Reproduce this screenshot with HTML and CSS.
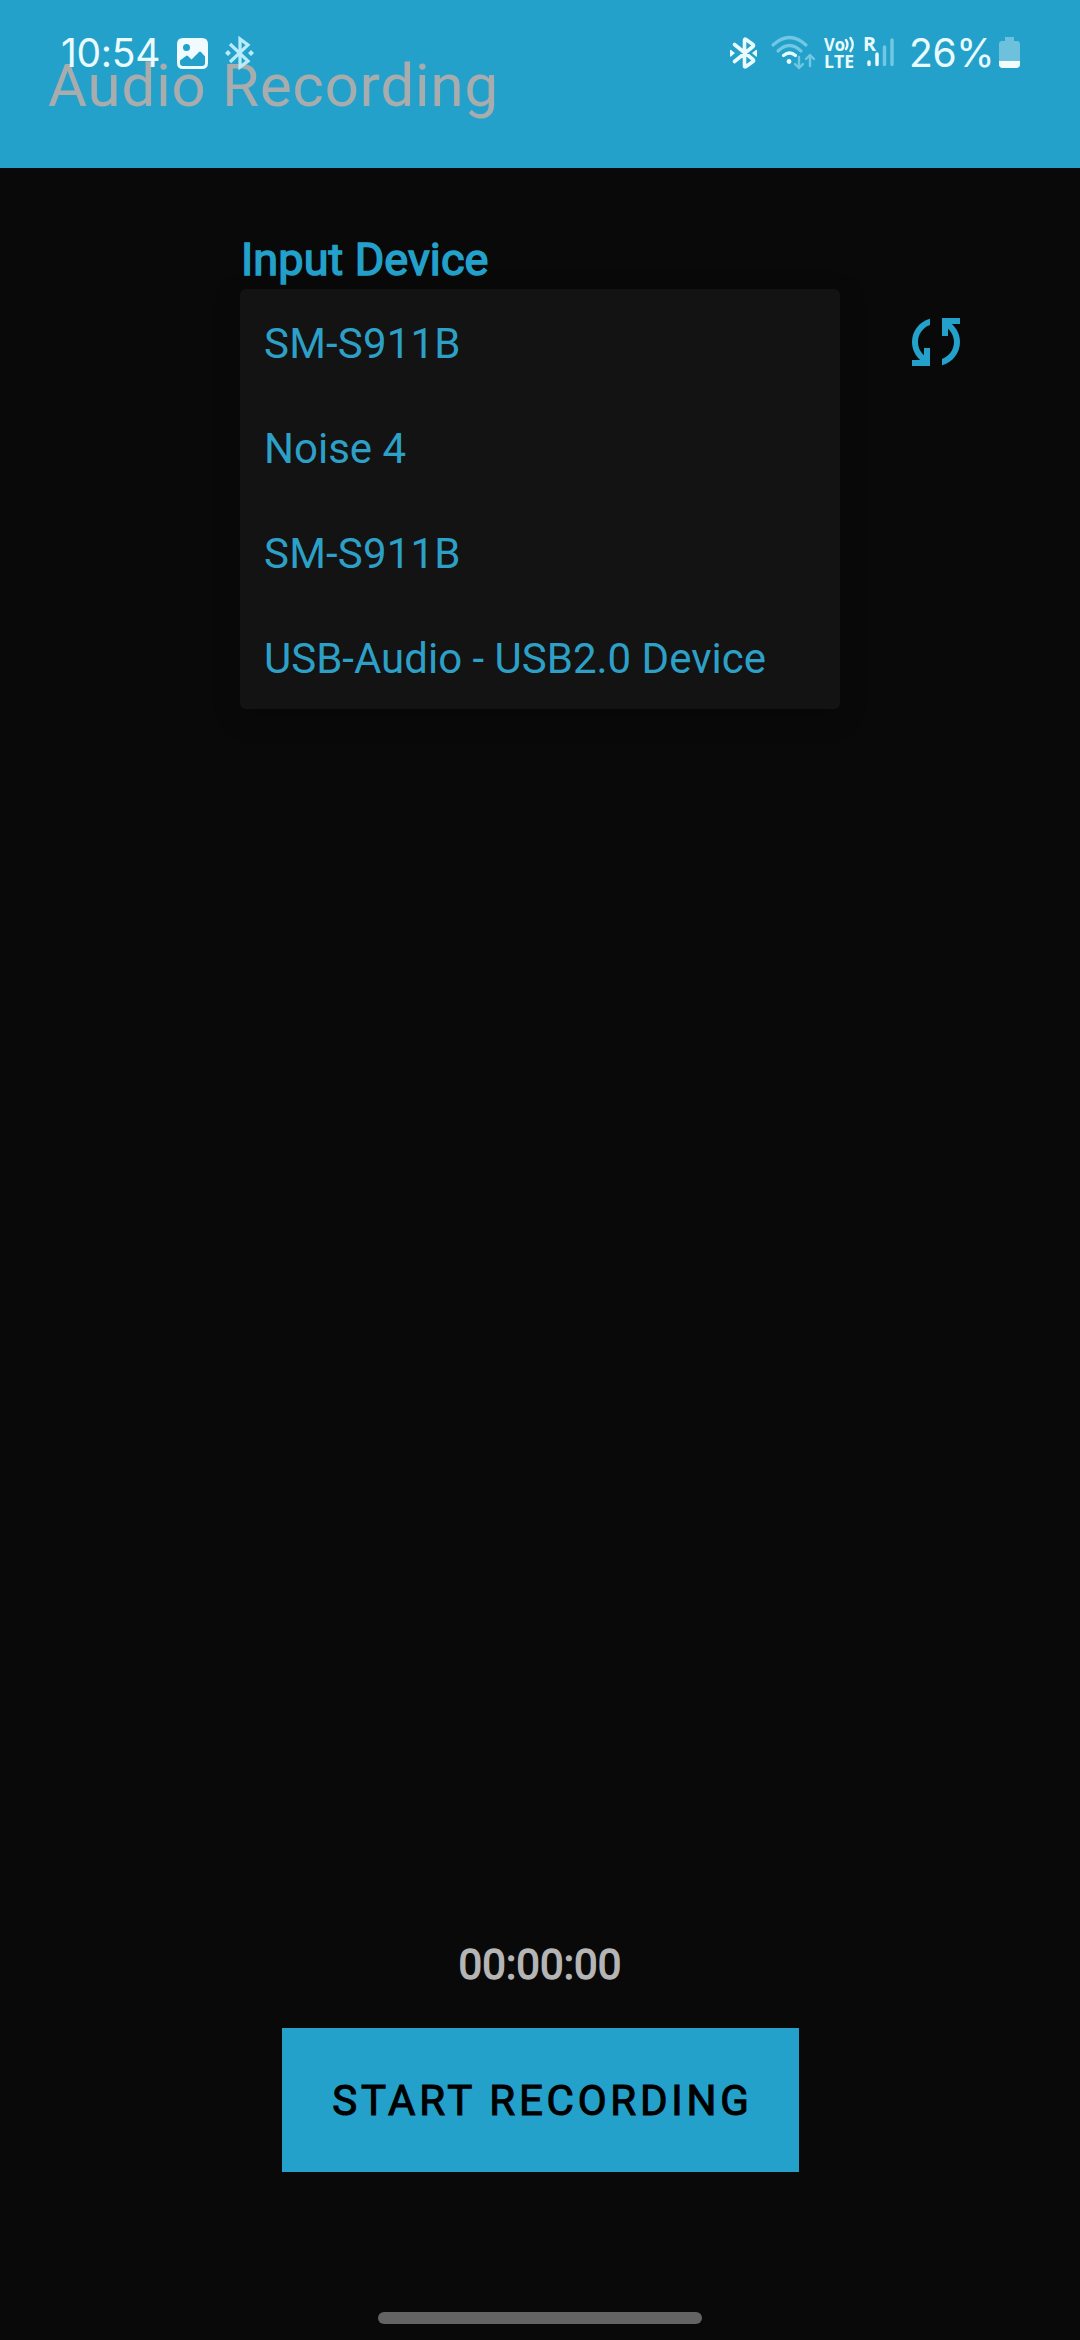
FILE: index.html
```html
<!DOCTYPE html>
<html lang="en">
<head>
<meta charset="utf-8">
<title>Audio Recording</title>
<link rel="stylesheet" href="styles.css">
</head>
<body>
<div class="screen">
  <header class="app-bar">
    <h1 class="title">Audio Recording</h1>
    <div class="status">
      <div class="status-left">
        <span class="clock">10:54</span>
        <svg class="ic-image" width="31" height="31" viewBox="0 0 31 31"><path fill-rule="evenodd" fill="#f0fbff" d="M6 0H25Q31 0 31 6V25Q31 31 25 31H6Q0 31 0 25V6Q0 0 6 0ZM9.500 6A3.500 3.500 0 1 0 9.500 13A3.500 3.500 0 1 0 9.500 6ZM3 22.500V25Q3 28 6 28H25Q28 28 28 25V18.500L24 14Q23 13 22 14L14.500 21.500L11 18Q10 17 9 18Z"/></svg>
        <svg class="ic-bt-left" width="30" height="34" viewBox="0 0 30 34"><g fill="none" stroke="#b9ecfb" stroke-width="3.200"><path d="M5 8L23 25L15 31V3L23 9L5 26"/></g><path fill="#b9ecfb" d="M3 14l3 3-3 3-3-3zM26 14l3 3-3 3-3-3z"/></svg>
      </div>
      <div class="status-right">
        <svg class="ic-bt" width="28" height="32" viewBox="0 0 28 32"><path d="M4.500 7.500L23 22.500Q24 23.500 23 24.500L16 29.500Q14.500 30.500 14.500 29V3Q14.500 1.500 16 2.500L23 7.500Q24 8.500 23 9.500L4.500 24.500" fill="none" stroke="#e9fbff" stroke-width="3.600" stroke-linecap="round" stroke-linejoin="round"/><path fill="#e9fbff" d="M0 13.500Q0 12.500 1 13L5 16L1 19.500Q0 20 0 19ZM27 13.500Q27 12.500 26 13L22 16L26 19.500Q27 20 27 19Z"/></svg>
        <svg class="ic-wifi" width="46" height="36" viewBox="0 0 46 36"><g fill="none" stroke-width="3.200" stroke-linecap="round"><path stroke="#72c7e2" d="M3 10Q19.500-5 36 10M8 16Q19.500 5 31 16"/><path stroke="#e9fbff" d="M13.500 20.500Q19.500 15.500 25.500 20.500"/><path stroke="#72c7e2" stroke-width="2.400" stroke-linejoin="round" d="M29 22V33M25 29L29 33L33 29M40 31V20M36 24L40 20L44 24"/></g><circle cx="19" cy="26.500" r="2.400" fill="#e9fbff"/></svg>
        <svg class="ic-volte" width="31" height="36" viewBox="0 0 31 36"><g fill="#e9fbff" font-family="Open Sans, sans-serif" font-weight="700" font-size="17"><text x="0" y="16" textLength="21" lengthAdjust="spacingAndGlyphs">Vo</text><text x="0" y="33" textLength="30" lengthAdjust="spacingAndGlyphs">LTE</text></g><path d="M22 5Q25 9.500 22 14M26.500 3Q31 9.500 26.500 16" fill="none" stroke="#e9fbff" stroke-width="2.400" stroke-linecap="round"/></svg>
        <svg class="ic-signal" width="32" height="36" viewBox="0 0 32 36"><text x="-1" y="16" fill="#e9fbff" font-family="Open Sans, sans-serif" font-weight="700" font-size="19" textLength="13" lengthAdjust="spacingAndGlyphs">R</text><g stroke-width="3.500" stroke-linecap="round"><path stroke="#e9fbff" d="M5 27V29.500M13 19V29.500"/><path stroke="#72c7e2" d="M20.500 12V29.500M28 5V29.500"/></g></svg>
        <span class="battery-text">26%</span>
        <svg class="ic-battery" width="21" height="31" viewBox="0 0 21 31"><path fill="#6dc1dd" d="M6 0H15V4H18Q21 4 21 7V27Q21 31 17 31H4Q0 31 0 27V7Q0 4 3 4H6Z"/><path fill="#f0fdff" d="M0 24H21V27Q21 31 17 31H4Q0 31 0 27Z"/></svg>
      </div>
    </div>
  </header>
  <main class="content">
    <section class="picker">
      <label class="label">Input Device</label>
      <div class="picker-row">
        <ul class="options">
          <li class="model">SM-S911B</li>
          <li>Noise 4</li>
          <li class="model">SM-S911B</li>
          <li>USB-Audio - USB2.0 Device</li>
        </ul>
        <svg class="refresh" width="72" height="72" viewBox="0 0 24 24"><path d="M10 4.260V6.350C7.670 7.170 6 9.390 6 12c0 1.770.780 3.340 2 4.440V14h2v6H4v-2h2.730C5.060 16.540 4 14.400 4 12c0-3.730 2.550-6.850 6-7.740zM14 4h6v2h-2.730C18.950 7.460 20 9.600 20 12c0 3.730-2.550 6.850-6 7.740v-2.090c2.330-.820 4-3.040 4-5.650 0-1.770-.780-3.340-2-4.440V10h-2z"/></svg>
      </div>
    </section>
    <section class="recorder">
      <div class="timer">00:00:00</div>
      <button class="start">START RECORDING</button>
    </section>
  </main>
  <footer class="nav"><div class="handle"></div></footer>
</div>
</body>
</html>
```
FILE: styles.css
```css
* { box-sizing: border-box; margin: 0; padding: 0; }
body { background: #090909; font-family: Roboto, sans-serif; }
svg { flex: none; overflow: visible; }
.screen { width: 1080px; height: 2340px; display: flex; flex-direction: column; background: #090909; overflow: hidden; }
.app-bar { position: relative; height: 168px; flex: none; background: #23a1ca; padding: 51px 48px 0; }
.title { font-size: 60px; line-height: 70px; font-weight: 400; letter-spacing: 0.8px; color: #a9acad; white-space: nowrap; }
.status { position: absolute; left: 0; top: 0; width: 1080px; height: 106px; padding: 0 60px 0 61px; display: flex; justify-content: space-between; color: #e9fbff; font-family: Inter, sans-serif; font-size: 39px; line-height: 46px; letter-spacing: -0.3px; }
.status-left, .status-right { display: flex; align-items: flex-start; height: 80px; }
.status svg { letter-spacing: 0; }
.clock { width: 116px; padding-top: 30px; white-space: nowrap; }
.ic-image { margin-top: 38px; }
.ic-bt-left { margin: 36px 0 0 17px; }
.ic-bt { margin-top: 37px; }
.ic-wifi { margin: 35px 0 0 12px; }
.ic-volte { margin: 35px 0 0 8px; }
.ic-signal { margin: 35px 0 0 9px; }
.battery-text { width: 90px; margin-left: 13px; padding-top: 30px; white-space: nowrap; }
.ic-battery { margin-top: 37px; }
.content { flex: 1; display: flex; flex-direction: column; justify-content: space-between; }
.picker { padding: 65px 108px 0 240px; }
.label { display: block; height: 56px; line-height: 54px; font-size: 45px; color: #23a1ca; -webkit-text-stroke: 1.5px #23a1ca; letter-spacing: 0.1px; padding-left: 1px; white-space: nowrap; }
.picker-row { display: flex; justify-content: space-between; align-items: flex-start; }
.options { width: 600px; list-style: none; background: #131313; border-radius: 6px; box-shadow: 0 8px 28px rgba(0, 0, 0, 0.22); }
.options li { height: 105px; padding-left: 24px; line-height: 109px; font-size: 42px; color: #2da0c7; white-space: nowrap; }
.options .model { font-kerning: none; letter-spacing: 0.2px; }
.refresh { margin-top: 17px; fill: #23a1ca; }
.recorder { display: flex; flex-direction: column; align-items: center; gap: 35px; padding-bottom: 116px; }
.timer { font-size: 42px; line-height: 56px; color: #b5b5b5; letter-spacing: 0.15px; -webkit-text-stroke: 1.4px #b5b5b5; }
.start { width: 517px; height: 144px; margin-left: 1px; padding-left: 3.75px; border: 0; background: #23a1ca; color: #000; font: 400 42px Roboto, sans-serif; -webkit-text-stroke: 1.1px #000; letter-spacing: 3.75px; white-space: nowrap; }
.nav { height: 52px; flex: none; display: flex; justify-content: center; padding-top: 24px; }
.handle { width: 324px; height: 12px; border-radius: 6px; background: #636363; }
```
